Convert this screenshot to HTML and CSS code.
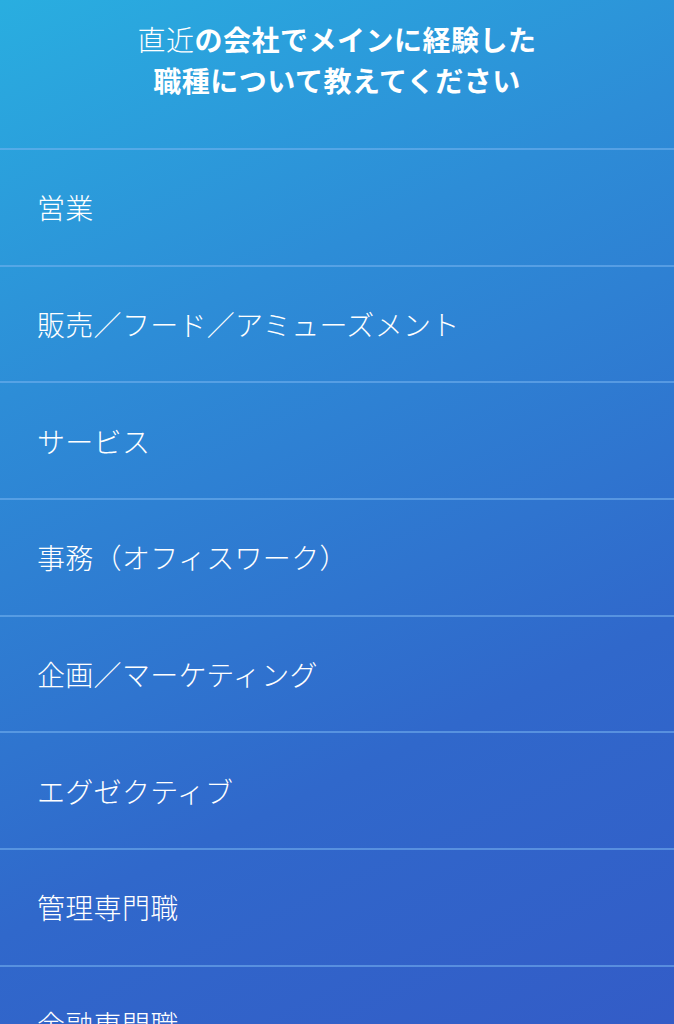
FILE: index.html
```html
<!DOCTYPE html>
<html lang="ja">
<head>
<meta charset="utf-8">
<link rel="stylesheet" href="styles.css">
</head>
<body>
<div class="screen">
  <header class="head">
    <h1 class="title"><span class="light">直近</span>の会社でメインに経験した<br>職種について教えてください</h1>
  </header>
  <ul class="list">
    <li class="item">営業</li>
    <li class="item">販売／フード／アミューズメント</li>
    <li class="item">サービス</li>
    <li class="item">事務（オフィスワーク）</li>
    <li class="item">企画／マーケティング</li>
    <li class="item">エグゼクティブ</li>
    <li class="item">管理専門職</li>
    <li class="item">金融専門職</li>
  </ul>
</div>
</body>
</html>
```

FILE: styles.css
```css
html, body {
  margin: 0;
  padding: 0;
}
body {
  width: 674px;
  height: 1024px;
  overflow: hidden;
  font-family: "Noto Sans CJK JP", "Noto Sans", sans-serif;
  color: #ffffff;
}
.screen {
  height: 1024px;
  background: linear-gradient(155deg, #29aee0 0%, #2d8dd7 30%, #3068cb 70%, #335cc7 100%);
  overflow: hidden;
}
.head {
  height: 148px;
  display: flex;
  justify-content: center;
  padding-top: 19px;
  box-sizing: border-box;
}
.title {
  margin: 0;
  font-size: 28px;
  font-weight: 700;
  line-height: 41px;
  text-align: center;
  letter-spacing: 0.5px;
}
.light {
  font-weight: 300;
}
.list {
  list-style: none;
  margin: 0;
  padding: 0;
}
.item {
  height: 116.67px;
  box-sizing: border-box;
  border-top: 2px solid rgba(120, 180, 240, 0.55);
  display: flex;
  align-items: center;
  padding-left: 37px;
  font-size: 28px;
  font-weight: 300;
  letter-spacing: 0.3px;
}
```
